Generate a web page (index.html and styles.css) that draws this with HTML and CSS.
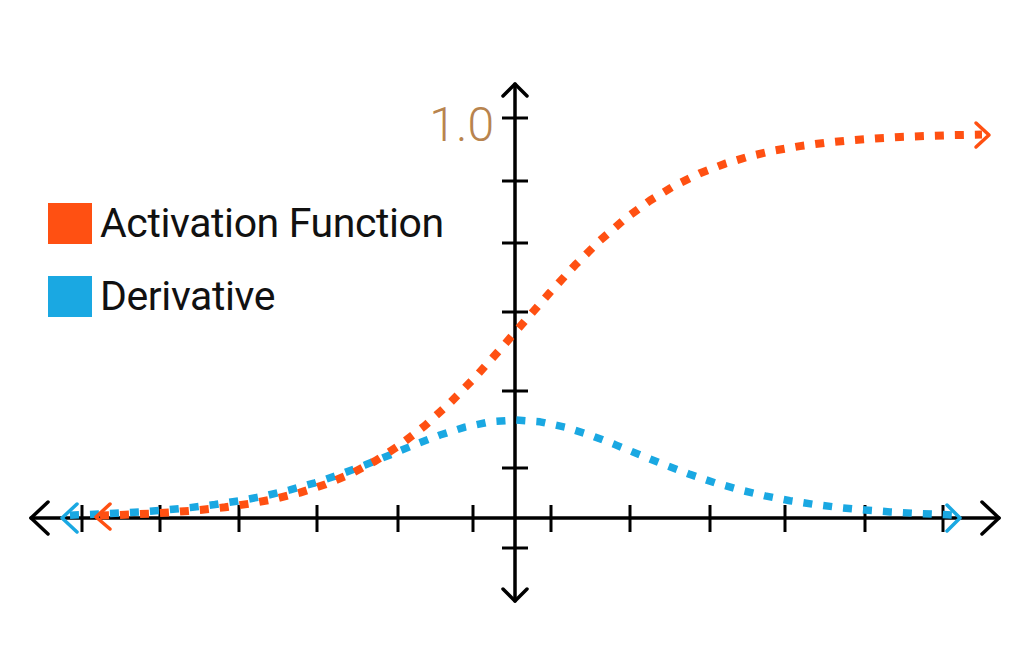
FILE: index.html
```html
<!DOCTYPE html>
<html lang="en">
<head>
<meta charset="utf-8">
<title>Activation Function and Derivative</title>
<link rel="stylesheet" href="styles.css">
</head>
<body>
<div class="stage">
  <svg class="chart" viewBox="0 0 1024 649" width="1024" height="649" xmlns="http://www.w3.org/2000/svg">
    <g class="axis">
      <line x1="31" y1="518" x2="999" y2="518"/>
      <line x1="515" y1="84" x2="515" y2="601"/>
      <polyline points="48,502 31,518 48,534"/>
      <polyline points="982,502 999,518 982,534"/>
      <polyline points="503,96 515,84 527,96"/>
      <polyline points="503,589 515,601 527,589"/>
    </g>
    <g class="ticks">
      <line x1="502" y1="118" x2="528" y2="118"/>
      <line x1="502" y1="181" x2="528" y2="181"/>
      <line x1="502" y1="243" x2="528" y2="243"/>
      <line x1="502" y1="312" x2="528" y2="312"/>
      <line x1="502" y1="391" x2="528" y2="391"/>
      <line x1="502" y1="468" x2="528" y2="468"/>
      <line x1="502" y1="548" x2="528" y2="548"/>
      <line x1="82" y1="505" x2="82" y2="532"/>
      <line x1="160" y1="505" x2="160" y2="532"/>
      <line x1="239" y1="505" x2="239" y2="532"/>
      <line x1="317" y1="505" x2="317" y2="532"/>
      <line x1="398" y1="505" x2="398" y2="532"/>
      <line x1="473" y1="505" x2="473" y2="532"/>
      <line x1="551" y1="505" x2="551" y2="532"/>
      <line x1="630" y1="505" x2="630" y2="532"/>
      <line x1="710" y1="505" x2="710" y2="532"/>
      <line x1="785" y1="505" x2="785" y2="532"/>
      <line x1="865" y1="505" x2="865" y2="532"/>
      <line x1="943" y1="505" x2="943" y2="532"/>
    </g>
    <text class="y-label" x="494" y="141">1.0</text>

    <polyline class="curve curve-derivative" points="70,515.2 90,514.4 115,513.3 140,511.9 165,510 190,507.6 215,504.5 240,500.7 265,495.9 290,489.9 315,482.8 340,474.4 365,465 390,454.9 415,444.6 440,435 465,427.1 490,421.8 515,420 540,421.8 565,427.1 590,435 615,444.6 640,454.9 665,465 690,474.4 715,482.8 740,489.9 765,495.9 790,500.7 815,504.5 840,507.6 865,510 890,511.9 915,513.3 940,514.4 952,515"/>
    <polyline class="arrowhead arrow-derivative" points="77,504 62,518 77,532"/>
    <polyline class="arrowhead arrow-derivative" points="947,505 960,518 947,531"/>

    <polyline class="curve curve-activation" points="100,515.6 125,514.7 150,513.6 175,512 200,510 225,507.3 250,503.6 275,498.9 300,492.6 325,484.5 350,474.2 375,461.1 400,445 425,425.6 450,402.9 475,377.4 500,349.6 525,320.9 550,292.4 575,265.2 600,240.5 625,218.9 650,200.5 675,185.4 700,173.2 725,163.7 750,156.2 775,150.4 800,146.1 825,142.8 850,140.3 875,138.4 900,137 925,136 950,135.2 982,134.6"/>
    <polyline class="arrowhead arrow-activation" points="110,504 96,517 110,529"/>
    <polyline class="arrowhead arrow-activation" points="976,123 989,135 976,147"/>
  </svg>

  <div class="legend">
    <div class="legend-row">
      <span class="swatch swatch-activation"></span>
      <span class="legend-text">Activation Function</span>
    </div>
    <div class="legend-row">
      <span class="swatch swatch-derivative"></span>
      <span class="legend-text">Derivative</span>
    </div>
  </div>
</div>
</body>
</html>
```

FILE: styles.css
```css
html, body {
  margin: 0;
  padding: 0;
  background: #ffffff;
}

body {
  font-family: Roboto, "Liberation Sans", sans-serif;
}

.stage {
  position: relative;
  width: 1024px;
  height: 649px;
  overflow: hidden;
  background: #ffffff;
}

.chart {
  display: block;
}

.axis line,
.axis polyline {
  stroke: #000000;
  stroke-width: 3.5;
  fill: none;
  stroke-linecap: round;
  stroke-linejoin: round;
}

.ticks line {
  stroke: #000000;
  stroke-width: 3;
  stroke-linecap: butt;
}

.y-label {
  font-family: Roboto, "Liberation Sans", sans-serif;
  font-weight: 300;
  font-size: 48px;
  fill: #b8844e;
  text-anchor: end;
}

.curve {
  fill: none;
  stroke-width: 8;
  stroke-dasharray: 9 11;
  stroke-linecap: butt;
  stroke-linejoin: round;
}

.curve-activation {
  stroke: #ff5012;
}

.curve-derivative {
  stroke: #1aa8e2;
  stroke-width: 7.5;
}

.arrowhead {
  fill: none;
  stroke-width: 3.5;
  stroke-linecap: round;
  stroke-linejoin: round;
}

.arrow-activation {
  stroke: #ff5012;
}

.arrow-derivative {
  stroke: #1aa8e2;
}

.legend {
  position: absolute;
  left: 48px;
  top: 203px;
  display: flex;
  flex-direction: column;
  gap: 32px;
}

.legend-row {
  display: flex;
  align-items: center;
  gap: 8px;
  height: 41px;
}

.swatch {
  display: block;
  width: 44px;
  height: 41px;
  flex: none;
}

.swatch-activation {
  background: #ff5012;
}

.swatch-derivative {
  background: #1aa8e2;
}

.legend-text {
  font-size: 41px;
  line-height: 1;
  letter-spacing: -0.4px;
  color: #111111;
  white-space: nowrap;
}
```
